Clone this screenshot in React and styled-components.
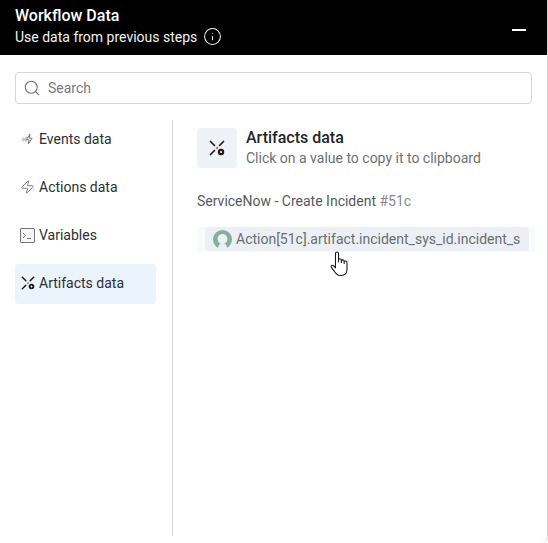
import { Search, Info, Zap } from "lucide-react";
import styled, { createGlobalStyle } from "styled-components";

const GlobalStyle = createGlobalStyle`
  html, body {
    margin: 0;
    padding: 0;
    background: #fff;
  }
  * {
    box-sizing: border-box;
  }
`;

const Panel = styled.div`
  width: 548px;
  height: 543px;
  background: #fff;
  border-right: 1px solid #d4d4d4;
  border-radius: 0 0 6px 6px;
  font-family: Roboto, "Liberation Sans", sans-serif;
  overflow: hidden;
`;

const Header = styled.header`
  height: 55px;
  background: #000;
  color: #fff;
  display: flex;
  align-items: center;
  justify-content: space-between;
  padding: 0 21px 0 15px;
`;

const HeaderTitle = styled.div`
  font-size: 16px;
  line-height: 20px;
  font-weight: 500;
  margin: -3px 0 1px;
`;

const HeaderSub = styled.div`
  display: flex;
  align-items: center;
  gap: 6px;
  font-size: 14px;
  line-height: 20px;
  color: #f2f2f2;
`;

const Minimize = styled.span`
  width: 14px;
  height: 2px;
  margin-top: 5px;
  background: #fff;
`;

const Body = styled.div`
  padding: 17px 15px 0;
`;

const SearchBox = styled.div`
  width: 517px;
  height: 32px;
  border: 1px solid #d6d6d6;
  border-radius: 4px;
  display: flex;
  align-items: center;
  gap: 7px;
  padding: 0 7px;
  color: #77797c;
  font-size: 14px;
`;

const Columns = styled.div`
  display: flex;
  margin-top: 16px;
  height: 416px;
`;

const Sidebar = styled.nav`
  flex: none;
  width: 158px;
  padding-right: 16px;
  border-right: 1px solid #d4d4d4;
  display: flex;
  flex-direction: column;
  gap: 8px;
`;

const NavItem = styled.div`
  height: 40px;
  display: flex;
  align-items: center;
  gap: 4px;
  padding: 0 0 2px 5px;
  border-radius: 4px;
  font-size: 14px;
  color: #2c2f33;
  background: ${(p) => (p.$active ? "#ebf3fc" : "transparent")};
`;

const NavIcon = styled.span`
  width: 15px;
  height: 16px;
  display: flex;
  align-items: center;
  justify-content: center;
  color: #6e6e6e;
`;

const Content = styled.section`
  flex: 1;
  min-width: 0;
  padding: 8px 0 0 24px;
`;

const ContentHead = styled.div`
  display: flex;
  gap: 9px;
`;

const IconTile = styled.div`
  width: 40px;
  height: 40px;
  border-radius: 4px;
  background: #eef1f5;
  display: flex;
  align-items: center;
  justify-content: center;
`;

const HeadTitle = styled.div`
  font-size: 16px;
  line-height: 20px;
  font-weight: 500;
  color: #22262b;
`;

const HeadSub = styled.div`
  font-size: 14px;
  line-height: 20px;
  color: #6c7075;
`;

const StepLabel = styled.div`
  margin-top: 23px;
  font-size: 14px;
  line-height: 20px;
  color: #55595e;
`;

const StepId = styled.span`
  color: #85898e;
`;

const ChipRow = styled.div`
  position: relative;
  width: 338px;
  height: 25px;
  margin-top: 16px;
  padding: 0 6px 0 8px;
  background: #f9fafc;
`;

const Chip = styled.div`
  height: 24px;
  display: flex;
  align-items: center;
  gap: 4px;
  padding-left: 8px;
  border-radius: 4px;
  background: #eceff4;
  font-size: 14px;
  color: #6b6e72;
  white-space: nowrap;
`;

const Cursor = styled.svg`
  position: absolute;
  left: 133px;
  top: 24px;
`;

function ArtifactIcon({ size = 16 }) {
  return (
    <svg width={size} height={size} viewBox="0 0 16 16" fill="none">
      <path d="M1.500 1.500L5.500 5.500M14.500 1.500L10.500 5.500M1.500 14.500L5.500 10.500" stroke="#1a1a1a" strokeWidth="1.700" strokeLinecap="round" />
      <circle cx="8" cy="8" r="1.200" fill="#e8703a" />
      <circle cx="12" cy="12" r="3.200" fill="#1a1a1a" />
      <circle cx="12" cy="12" r="1.100" fill="#fff" />
    </svg>
  );
}

function EventsIcon() {
  return (
    <svg width="18" height="16" viewBox="0 0 18 16" fill="none">
      <path d="M1 9l4-4v7z" fill="#d0d0d0" />
      <path d="M4 9l4-5v8z" fill="#c4c4c4" />
      <path d="M12 2L7.500 9h3.500L10 14l4.500-7H11z" fill="#fff" stroke="#777" strokeWidth="1.200" strokeLinejoin="round" />
    </svg>
  );
}

function TerminalIcon() {
  return (
    <svg width="15" height="15" viewBox="0 0 15 15" fill="none">
      <rect x="0.5" y="0.5" width="14" height="14" rx="0.5" fill="#f6f6f6" stroke="#777" />
      <path d="M3 5l2.500 2.500L3 10M7 10.500h4" stroke="#777" />
    </svg>
  );
}

// ring with a gap at the bottom, the step's app logo
function AppMark() {
  return (
    <svg width="19" height="19" viewBox="0 0 19 19">
      <circle cx="9.500" cy="9.500" r="9.500" fill="#84b09b" />
      <circle cx="9.500" cy="9" r="5" fill="#eceff4" />
      <path d="M5 19c0-4 2-6 4.500-6s4.500 2 4.500 6z" fill="#eceff4" />
    </svg>
  );
}

export default function App() {
  return (
    <>
      <GlobalStyle />
      <Panel>
        <Header>
          <div>
            <HeaderTitle>Workflow Data</HeaderTitle>
            <HeaderSub>
              Use data from previous steps
              <Info size={19} strokeWidth={1.3} />
            </HeaderSub>
          </div>
          <Minimize />
        </Header>
        <Body>
          <SearchBox>
            <Search size={18} strokeWidth={1.5} />
            Search
          </SearchBox>
          <Columns>
            <Sidebar>
              <NavItem>
                <NavIcon><EventsIcon /></NavIcon>
                Events data
              </NavItem>
              <NavItem>
                <NavIcon><Zap size={16} strokeWidth={1.4} /></NavIcon>
                Actions data
              </NavItem>
              <NavItem>
                <NavIcon><TerminalIcon /></NavIcon>
                Variables
              </NavItem>
              <NavItem $active>
                <NavIcon><ArtifactIcon size={14} /></NavIcon>
                Artifacts data
              </NavItem>
            </Sidebar>
            <Content>
              <ContentHead>
                <IconTile><ArtifactIcon /></IconTile>
                <div>
                  <HeadTitle>Artifacts data</HeadTitle>
                  <HeadSub>Click on a value to copy it to clipboard</HeadSub>
                </div>
              </ContentHead>
              <StepLabel>
                ServiceNow - Create Incident <StepId>#51c</StepId>
              </StepLabel>
              <ChipRow>
                <Chip>
                  <AppMark />
                  <span>Action[51c].artifact.incident_sys_id.incident_s</span>
                </Chip>
                <Cursor width="18" height="25" viewBox="0 0 16.500 23">
                  <path
                    d="M5 14V2.300a1.400 1.400 0 0 1 2.800 0V10V8.500a1.300 1.300 0 0 1 2.600 0V10.500V9.500a1.300 1.300 0 0 1 2.600 0V11.500V10.500a1.300 1.300 0 0 1 2.600 0V17c0 3.500-2 5.500-5.500 5.500H9c-3 0-4-2-5.500-4.500L1.200 15c-.8-1.500 1-2.600 2.200-1.400L5 15.500z"
                    fill="#fff"
                    stroke="#1a1a1a"
                    strokeWidth="1"
                    strokeLinejoin="round"
                  />
                </Cursor>
              </ChipRow>
            </Content>
          </Columns>
        </Body>
      </Panel>
    </>
  );
}
